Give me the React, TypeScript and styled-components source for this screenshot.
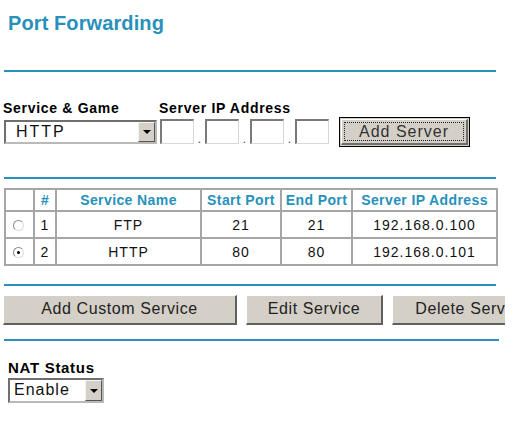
import React from "react";
import styled, { createGlobalStyle } from "styled-components";

const TEAL = "#2791bb";

const Global = createGlobalStyle`
  html, body { margin: 0; padding: 0; background: #fff; }
  body { font-family: "Liberation Sans", Arial, sans-serif; color: #000; }
`;

const Page = styled.div`
  width: 512px;
  height: 431px;
  overflow: hidden;
  padding: 0 0 0 4px;
  box-sizing: border-box;
`;

const Title = styled.h1`
  margin: 0;
  padding: 12px 0 0 4px;
  font-size: 20px;
  line-height: 22px;
  font-weight: bold;
  color: ${TEAL};
  letter-spacing: 0.1px;
`;

const Rule = styled.div<{ $top: number; $width?: number }>`
  margin-top: ${(p) => p.$top}px;
  height: 2px;
  width: ${(p) => p.$width ?? 492}px;
  background: ${TEAL};
`;

const LabelRow = styled.div`
  display: flex;
  margin-top: 28px;
  margin-left: -1px;
`;

const Label = styled.div<{ $w?: number }>`
  width: ${(p) => (p.$w ? `${p.$w}px` : "auto")};
  font-size: 14px;
  line-height: 16px;
  font-weight: bold;
  letter-spacing: 0.7px;
`;

const ControlRow = styled.div`
  display: flex;
  align-items: flex-start;
  margin-top: 4px;
`;

const SelectBox = styled.div<{ $w: number; $h: number }>`
  width: ${(p) => p.$w}px;
  height: ${(p) => p.$h}px;
  box-sizing: border-box;
  display: flex;
  align-items: stretch;
  background: #fff;
  border-top: 2px solid #6f6f6f;
  border-left: 2px solid #6f6f6f;
  border-bottom: 2px solid #b9b9b9;
  border-right: 2px solid #b9b9b9;
`;

const SelectText = styled.div<{ $pad: number; $ls: number }>`
  flex: 1;
  font-size: 16px;
  line-height: 18px;
  padding: 1px 0 0 ${(p) => p.$pad}px;
  letter-spacing: ${(p) => p.$ls}px;
  color: #111;
`;

const ArrowBtn = styled.div`
  width: 17px;
  box-sizing: border-box;
  background: #d4d0c8;
  border-top: 1px solid #f4f4f4;
  border-left: 1px solid #f4f4f4;
  border-right: 1px solid #555;
  border-bottom: 1px solid #555;
  display: flex;
  align-items: center;
  justify-content: center;
`;

const Triangle = styled.div`
  width: 0;
  height: 0;
  border-left: 4px solid transparent;
  border-right: 4px solid transparent;
  border-top: 4px solid #000;
`;

const IpGroup = styled.div`
  display: flex;
  align-items: flex-end;
  margin-left: 3px;
`;

const IpBox = styled.div`
  width: 34px;
  height: 25px;
  box-sizing: border-box;
  background: #fff;
  border-top: 2px solid #7a7a7a;
  border-left: 2px solid #7a7a7a;
  border-bottom: 1px solid #d8d8d8;
  border-right: 1px solid #d8d8d8;
  margin-top: -1px;
`;

const Dot = styled.div`
  width: 11px;
  font-size: 12px;
  line-height: 10px;
  text-align: center;
  color: #444;
`;

const DefaultButton = styled.div`
  margin-left: 10px;
  margin-top: -3px;
  width: 131px;
  height: 30px;
  box-sizing: border-box;
  border: 1px solid #000;
  background: #d4d0c8;
  padding: 1px;
`;

const ButtonBevel = styled.div`
  height: 100%;
  box-sizing: border-box;
  border-top: 1px solid #fff;
  border-left: 1px solid #fff;
  border-right: 2px solid #6e6e6e;
  border-bottom: 2px solid #6e6e6e;
  padding: 2px;
`;

const Focus = styled.div`
  height: 100%;
  box-sizing: border-box;
  border: 1px dotted #222;
  font-size: 16px;
  line-height: 18px;
  text-align: center;
  letter-spacing: 1px;
  color: #333;
`;

const Table = styled.table`
  margin-top: 9px;
  width: 492px;
  border-collapse: collapse;
  table-layout: fixed;
  border: 2px solid #a6a6a6;
`;

const Th = styled.th<{ $w: number }>`
  width: ${(p) => p.$w}px;
  height: 20px;
  padding: 0;
  border: 2px solid #a6a6a6;
  color: ${TEAL};
  font-size: 14px;
  font-weight: bold;
  text-align: center;
  white-space: nowrap;
  letter-spacing: 0.4px;
`;

const Td = styled.td<{ $left?: boolean }>`
  height: 25px;
  padding: 0;
  border: 2px solid #a6a6a6;
  font-size: 14px;
  letter-spacing: 1px;
  text-align: ${(p) => (p.$left ? "left" : "center")};
  color: #111;
`;

const Radio = styled.span<{ $on?: boolean }>`
  display: inline-block;
  width: 11px;
  height: 11px;
  border-radius: 50%;
  box-sizing: border-box;
  border: 1px solid #8a8a8a;
  border-bottom-color: #dedede;
  border-right-color: #dedede;
  background: #fff;
  position: relative;
  vertical-align: middle;
  margin-left: 7px;
  &::after {
    content: "";
    display: ${(p) => (p.$on ? "block" : "none")};
    position: absolute;
    left: 3px;
    top: 3px;
    width: 3px;
    height: 3px;
    border-radius: 50%;
    background: #000;
  }
`;

const ButtonRow = styled.div`
  display: flex;
  gap: 9px;
  margin-top: 9px;
  width: 502px;
  overflow: hidden;
  margin-left: -1px;
`;

const PlainButton = styled.div<{ $w: number }>`
  flex: 0 0 ${(p) => p.$w}px;
  height: 30px;
  box-sizing: border-box;
  background: #d4d0c8;
  border-top: 1px solid #fff;
  border-left: 1px solid #fff;
  border-right: 2px solid #606060;
  border-bottom: 2px solid #606060;
  font-size: 16px;
  line-height: 26px;
  letter-spacing: 0.6px;
  text-align: center;
  color: #222;
  white-space: nowrap;
  overflow: hidden;
`;

const NatLabel = styled.div`
  margin-top: 19px;
  margin-left: 4px;
  font-size: 15px;
  line-height: 16px;
  font-weight: bold;
  letter-spacing: 0.7px;
`;

const NatWrap = styled.div`
  margin-top: 2px;
  margin-left: 4px;
`;

const rows = [
  { n: 1, name: "FTP", start: 21, end: 21, ip: "192.168.0.100", on: false },
  { n: 2, name: "HTTP", start: 80, end: 80, ip: "192.168.0.101", on: true },
];

export default function App() {
  return (
    <Page>
      <Global />
      <Title>Port Forwarding</Title>
      <Rule $top={36} />
      <LabelRow>
        <Label $w={156}>Service &amp; Game</Label>
        <Label>Server IP Address</Label>
      </LabelRow>
      <ControlRow>
        <SelectBox $w={153} $h={24}>
          <SelectText $pad={10} $ls={2}>HTTP</SelectText>
          <ArrowBtn>
            <Triangle />
          </ArrowBtn>
        </SelectBox>
        <IpGroup>
          <IpBox />
          <Dot>.</Dot>
          <IpBox />
          <Dot>.</Dot>
          <IpBox />
          <Dot>.</Dot>
          <IpBox />
        </IpGroup>
        <DefaultButton>
          <ButtonBevel>
            <Focus>Add Server</Focus>
          </ButtonBevel>
        </DefaultButton>
      </ControlRow>
      <Rule $top={30} />
      <Table>
        <thead>
          <tr>
            <Th $w={27}></Th>
            <Th $w={20}>#</Th>
            <Th $w={143}>Service Name</Th>
            <Th $w={78}>Start Port</Th>
            <Th $w={69}>End Port</Th>
            <Th $w={143}>Server IP Address</Th>
          </tr>
        </thead>
        <tbody>
          {rows.map((r) => (
            <tr key={r.n}>
              <Td $left>
                <Radio $on={r.on} />
              </Td>
              <Td>{r.n}</Td>
              <Td>{r.name}</Td>
              <Td>{r.start}</Td>
              <Td>{r.end}</Td>
              <Td>{r.ip}</Td>
            </tr>
          ))}
        </tbody>
      </Table>
      <Rule $top={18} />
      <ButtonRow>
        <PlainButton $w={234}>Add Custom Service</PlainButton>
        <PlainButton $w={137}>Edit Service</PlainButton>
        <PlainButton $w={160}>Delete Service</PlainButton>
      </ButtonRow>
      <Rule $top={14} $width={495} />
      <NatLabel>NAT Status</NatLabel>
      <NatWrap>
        <SelectBox $w={96} $h={25}>
          <SelectText $pad={4} $ls={1}>Enable</SelectText>
          <ArrowBtn>
            <Triangle />
          </ArrowBtn>
        </SelectBox>
      </NatWrap>
    </Page>
  );
}
